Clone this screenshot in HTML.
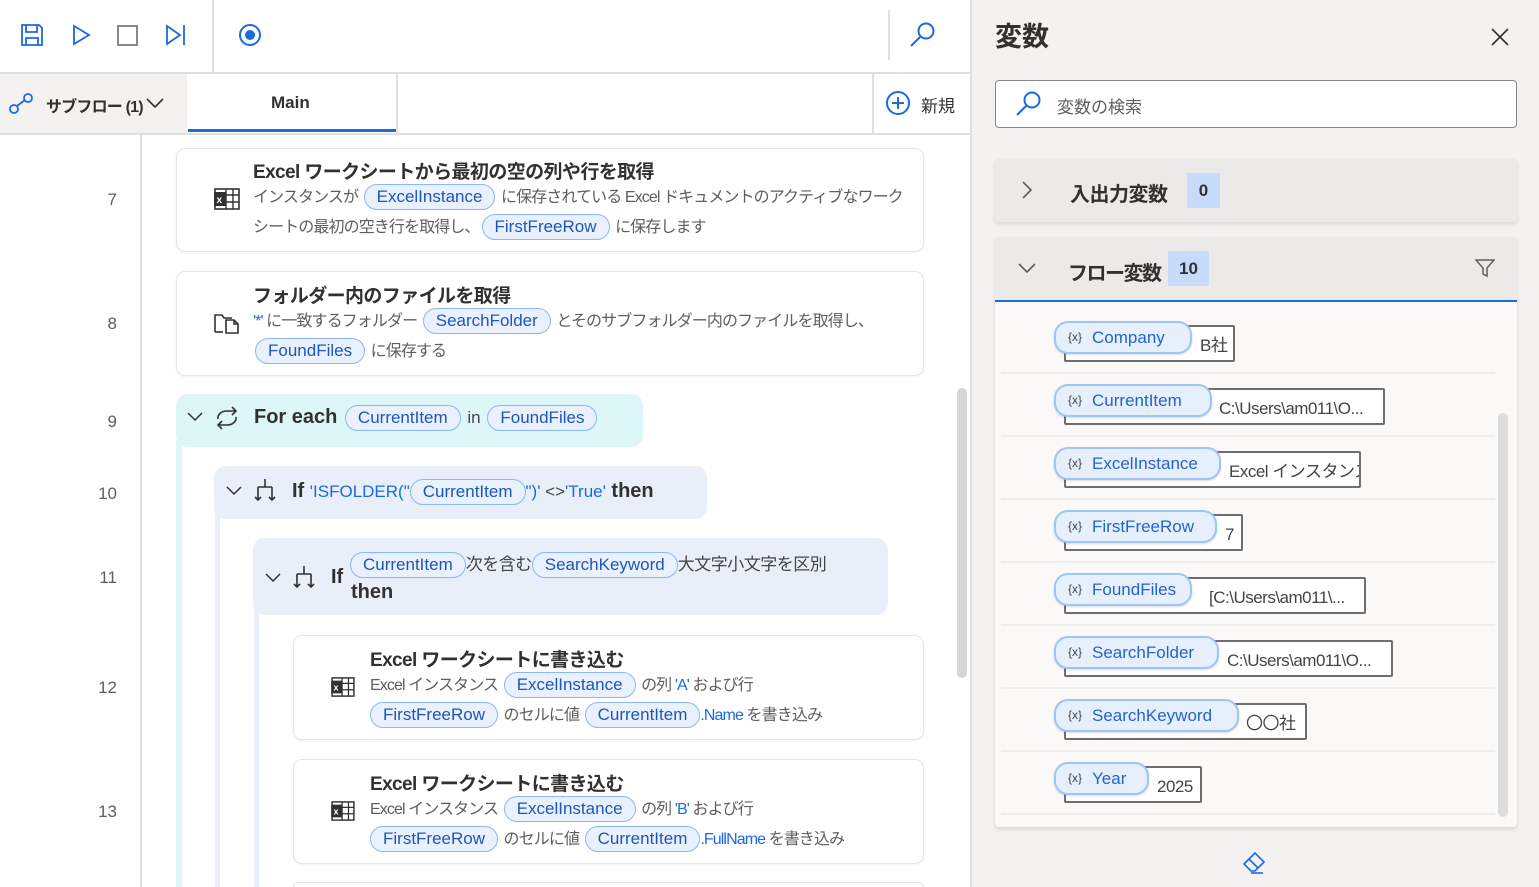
<!DOCTYPE html>
<html style="width:1539px;height:887px;overflow:hidden"><head><meta charset="utf-8">
<style>
*{box-sizing:border-box;margin:0;padding:0}
body{width:1539px;height:887px;overflow:hidden;position:relative;background:#fff;font-family:"Liberation Sans","Noto Sans CJK JP",sans-serif;color:#323130}
.a{position:absolute}
.card{position:absolute;background:#fff;border:1px solid #e6e6e6;border-radius:9px;box-shadow:0 1px 2px rgba(0,0,0,.06)}
.t{position:absolute;font-size:19px;color:#323130;white-space:nowrap;font-weight:bold;letter-spacing:-0.6px}
.l{position:absolute;font-size:16px;color:#605e5c;white-space:nowrap;line-height:26px;letter-spacing:-0.9px}
.p{display:inline-block;border:1px solid #8cb6f5;background:#e8f1fd;color:#1e56b8;border-radius:13px;padding:0 12px;line-height:24px;font-size:17px;margin:0 2px;letter-spacing:0}
.b{color:#1a6ae0}
.ln{position:absolute;right:1422px;font-size:17px;color:#605e5c}
.vp{position:absolute;height:33px;border:2px solid #9fc4f6;background:#e6f0fd;border-radius:14px;color:#2563c9;font-size:17px;line-height:29px;padding-left:12px;white-space:nowrap;box-shadow:0 1px 2px rgba(0,0,0,.15)}
.vp i{font-style:normal;font-size:12px;color:#444;margin-right:10px;vertical-align:2px}
.vb{position:absolute;height:37px;border:2px solid #6e6e6e;border-radius:2px;background:#fff;font-size:17px;color:#444;line-height:38px;white-space:nowrap;overflow:hidden;letter-spacing:-0.5px}
.sep{position:absolute;left:1001px;width:494px;height:2px;background:#efeeed}
</style></head><body>
<!-- toolbar -->
<div class="a" style="left:0;top:72px;width:970px;height:2px;background:#e1dfdd"></div>
<div class="a" style="left:212px;top:0;width:2px;height:72px;background:#e1dfdd"></div>
<div class="a" style="left:888px;top:10px;width:2px;height:50px;background:#e1dfdd"></div>
<svg class="a" style="left:20px;top:23px" width="24" height="24" viewBox="0 0 24 24" fill="none" stroke="#1a6ae0" stroke-width="1.8"><path d="M2 2h17l3 3v17H2z"/><path d="M6 2v7h11V2"/><path d="M6 22v-7h12v7"/></svg>
<svg class="a" style="left:72px;top:24px" width="20" height="22" viewBox="0 0 20 22" fill="none" stroke="#1a6ae0" stroke-width="1.8"><path d="M2 2l15 9-15 9z"/></svg>
<div class="a" style="left:117px;top:25px;width:21px;height:21px;border:2px solid #8a8886"></div>
<svg class="a" style="left:165px;top:24px" width="22" height="22" viewBox="0 0 22 22" fill="none" stroke="#1a6ae0" stroke-width="1.8"><path d="M2 2l13 9-13 9z"/><path d="M19 1v20"/></svg>
<svg class="a" style="left:238px;top:23px" width="24" height="24" viewBox="0 0 24 24"><circle cx="12" cy="12" r="10" fill="none" stroke="#1a6ae0" stroke-width="2"/><circle cx="12" cy="12" r="5" fill="#1a6ae0"/></svg>
<svg class="a" style="left:909px;top:21px" width="28" height="28" viewBox="0 0 28 28" fill="none" stroke="#1a6ae0" stroke-width="2"><circle cx="17" cy="10" r="7.5"/><path d="M11.5 15.5L2 25"/></svg>
<!-- tabs -->
<div class="a" style="left:0;top:74px;width:187px;height:59px;background:#f3f2f1"></div>
<svg class="a" style="left:8px;top:92px" width="26" height="24" viewBox="0 0 26 24" fill="none" stroke="#1a6ae0" stroke-width="1.8"><circle cx="6" cy="17" r="4"/><circle cx="20" cy="6" r="4"/><path d="M9 14l8-6"/></svg>
<div class="a" style="left:46px;top:93px;font-size:16px;font-weight:bold;color:#323130;letter-spacing:-0.8px;white-space:nowrap">サブフロー (1)</div>
<svg class="a" style="left:146px;top:97px" width="18" height="12" viewBox="0 0 18 12" fill="none" stroke="#323130" stroke-width="1.6"><path d="M1 2l8 8 8-8"/></svg>
<div class="a" style="left:271px;top:93px;font-size:17px;font-weight:bold">Main</div>
<div class="a" style="left:188px;top:129px;width:208px;height:3px;background:#1a6ae0"></div>
<div class="a" style="left:396px;top:74px;width:2px;height:59px;background:#e1dfdd"></div>
<div class="a" style="left:872px;top:74px;width:2px;height:59px;background:#e1dfdd"></div>
<svg class="a" style="left:885px;top:90px" width="26" height="26" viewBox="0 0 26 26" fill="none" stroke="#1a6ae0" stroke-width="2"><circle cx="13" cy="13" r="11"/><path d="M13 7v12M7 13h12"/></svg>
<div class="a" style="left:921px;top:92px;font-size:17px;color:#323130">新規</div>
<div class="a" style="left:0;top:133px;width:970px;height:2px;background:#e1dfdd"></div>
<!-- gutter -->
<div class="a" style="left:140px;top:135px;width:2px;height:752px;background:#e1dfdd"></div>
<div class="ln" style="top:190px">7</div><div class="ln" style="top:314px">8</div><div class="ln" style="top:412px">9</div><div class="ln" style="top:484px">10</div><div class="ln" style="top:568px">11</div><div class="ln" style="top:678px">12</div><div class="ln" style="top:802px">13</div>
<!-- vertical nest lines -->
<div class="a" style="left:176px;top:440px;width:6px;height:447px;background:#ddf6f8"></div>
<div class="a" style="left:215px;top:512px;width:5px;height:375px;background:#e8eff9"></div>
<div class="a" style="left:254px;top:608px;width:5px;height:279px;background:#e8eff9"></div>
<!-- card 7 -->
<div class="card" style="left:176px;top:148px;width:748px;height:104px"></div>
<svg class="a" style="left:214px;top:188px" width="26" height="22" viewBox="0 0 26 22"><rect x="1" y="1" width="24" height="20" fill="none" stroke="#323130" stroke-width="1.6"/><path d="M12 1v20M19 1v20M12 7h13M12 14h13" stroke="#323130" stroke-width="1.4"/><rect x="0" y="4" width="12" height="14" fill="#323130"/><text x="2.5" y="15" font-size="10" fill="#fff" font-family="Liberation Sans" font-weight="bold">x</text></svg>
<div class="t" style="left:253px;top:157px">Excel ワークシートから最初の空の列や行を取得</div>
<div class="l" style="left:253px;top:184px">インスタンスが <span class="p">ExcelInstance</span> に保存されている Excel ドキュメントのアクティブなワーク</div>
<div class="l" style="left:253px;top:214px">シートの最初の空き行を取得し、<span class="p">FirstFreeRow</span> に保存します</div>
<!-- card 8 -->
<div class="card" style="left:176px;top:271px;width:748px;height:105px"></div>
<svg class="a" style="left:214px;top:312px" width="26" height="22" viewBox="0 0 26 22" fill="none" stroke="#323130" stroke-width="1.6"><path d="M1 20V3h7l2 3h8"/><path d="M1 20h8"/><path d="M12 8h8l4 4v9H12z"/><path d="M20 8v4h4"/></svg>
<div class="t" style="left:253px;top:281px">フォルダー内のファイルを取得</div>
<div class="l" style="left:253px;top:308px"><span class="b">'*'</span> に一致するフォルダー <span class="p">SearchFolder</span> とそのサブフォルダー内のファイルを取得し、</div>
<div class="l" style="left:253px;top:338px"><span class="p">FoundFiles</span> に保存する</div>
<!-- for each -->
<div class="a" style="left:176px;top:394px;width:467px;height:53px;background:#ddf6f8;border-radius:12px"></div>
<svg class="a" style="left:186px;top:411px" width="18" height="12" viewBox="0 0 18 12" fill="none" stroke="#323130" stroke-width="1.5"><path d="M2 2l7 7 7-7"/></svg>
<svg class="a" style="left:213px;top:406px" width="28" height="24" viewBox="0 0 28 24" fill="none" stroke="#323130" stroke-width="1.6"><path d="M5 13a9 7 0 0 1 9-8h9"/><path d="M19 1l4 4-4 4"/><path d="M23 11a9 7 0 0 1-9 8H5"/><path d="M9 15l-4 4 4 4"/></svg>
<div class="a" style="left:254px;top:405px;font-size:20px;font-weight:bold;white-space:nowrap">For each <span class="p" style="font-weight:400">CurrentItem</span><span style="font-size:17px;color:#444;font-weight:400"> in </span><span class="p" style="font-weight:400">FoundFiles</span></div>
<!-- if 10 -->
<div class="a" style="left:214px;top:466px;width:493px;height:53px;background:#e8eff9;border-radius:12px"></div>
<svg class="a" style="left:225px;top:485px" width="18" height="12" viewBox="0 0 18 12" fill="none" stroke="#323130" stroke-width="1.5"><path d="M2 2l7 7 7-7"/></svg>
<svg class="a" style="left:254px;top:478px" width="22" height="24" viewBox="0 0 22 24" fill="none" stroke="#323130" stroke-width="1.6"><path d="M11 1v8M4 9h14M4 9v13M18 9v13M1 19l3 3 3-3M15 19l3 3 3-3"/></svg>
<div class="a" style="left:292px;top:479px;font-size:20px;font-weight:bold;white-space:nowrap">If <span class="b" style="font-size:17px;font-weight:400">'ISFOLDER("</span><span class="p" style="font-weight:400;margin:0">CurrentItem</span><span class="b" style="font-size:17px;font-weight:400">")' </span><span style="font-size:17px;font-weight:400;color:#444">&lt;&gt;</span><span class="b" style="font-size:17px;font-weight:400">'True'</span> then</div>
<!-- if 11 -->
<div class="a" style="left:253px;top:538px;width:635px;height:77px;background:#e8eff9;border-radius:12px"></div>
<svg class="a" style="left:264px;top:572px" width="18" height="12" viewBox="0 0 18 12" fill="none" stroke="#323130" stroke-width="1.5"><path d="M2 2l7 7 7-7"/></svg>
<svg class="a" style="left:293px;top:565px" width="22" height="24" viewBox="0 0 22 24" fill="none" stroke="#323130" stroke-width="1.6"><path d="M11 1v8M4 9h14M4 9v13M18 9v13M1 19l3 3 3-3M15 19l3 3 3-3"/></svg>
<div class="a" style="left:331px;top:566px;font-size:20px;font-weight:bold">If</div>
<div class="a" style="left:350px;top:550px;font-size:17px;color:#444;white-space:nowrap;letter-spacing:-0.5px"><span class="p" style="margin:0">CurrentItem</span>次を含む<span class="p" style="margin:0">SearchKeyword</span>大文字小文字を区別</div>
<div class="a" style="left:351px;top:581px;font-size:20px;font-weight:bold">then</div>
<!-- card 12 -->
<div class="card" style="left:293px;top:635px;width:631px;height:105px"></div>
<svg class="a" style="left:331px;top:677px" width="24" height="20" viewBox="0 0 26 22"><rect x="1" y="1" width="24" height="20" fill="none" stroke="#323130" stroke-width="1.6"/><path d="M12 1v20M19 1v20M12 7h13M12 14h13" stroke="#323130" stroke-width="1.4"/><rect x="0" y="4" width="12" height="14" fill="#323130"/><text x="2.5" y="15" font-size="10" fill="#fff" font-family="Liberation Sans" font-weight="bold">x</text></svg>
<div class="t" style="left:370px;top:645px">Excel ワークシートに書き込む</div>
<div class="l" style="left:370px;top:672px">Excel インスタンス <span class="p">ExcelInstance</span> の列 <span class="b">'A'</span> および行</div>
<div class="l" style="left:370px;top:702px"><span class="p" style="margin-left:0">FirstFreeRow</span> のセルに値 <span class="p" style="margin-right:0">CurrentItem</span><span class="b">.Name</span> を書き込み</div>
<!-- card 13 -->
<div class="card" style="left:293px;top:759px;width:631px;height:105px"></div>
<svg class="a" style="left:331px;top:801px" width="24" height="20" viewBox="0 0 26 22"><rect x="1" y="1" width="24" height="20" fill="none" stroke="#323130" stroke-width="1.6"/><path d="M12 1v20M19 1v20M12 7h13M12 14h13" stroke="#323130" stroke-width="1.4"/><rect x="0" y="4" width="12" height="14" fill="#323130"/><text x="2.5" y="15" font-size="10" fill="#fff" font-family="Liberation Sans" font-weight="bold">x</text></svg>
<div class="t" style="left:370px;top:769px">Excel ワークシートに書き込む</div>
<div class="l" style="left:370px;top:796px">Excel インスタンス <span class="p">ExcelInstance</span> の列 <span class="b">'B'</span> および行</div>
<div class="l" style="left:370px;top:826px"><span class="p" style="margin-left:0">FirstFreeRow</span> のセルに値 <span class="p" style="margin-right:0">CurrentItem</span><span class="b">.FullName</span> を書き込み</div>
<div class="card" style="left:293px;top:882px;width:631px;height:5px;border-bottom:none;border-radius:9px 9px 0 0"></div>
<!-- scrollbar -->
<div class="a" style="left:957px;top:388px;width:10px;height:290px;background:#d6d6d6;border-radius:5px"></div>

<!-- right panel -->
<div class="a" style="left:970px;top:0;width:569px;height:887px;background:#f3f2f1;border-left:2px solid #e1dfdd"></div>
<div class="a" style="left:995px;top:15px;font-size:27px;font-weight:700;color:#323130">変数</div>
<svg class="a" style="left:1491px;top:28px" width="18" height="18" viewBox="0 0 18 18" stroke="#323130" stroke-width="1.6"><path d="M1 1l16 16M17 1L1 17"/></svg>
<div class="a" style="left:995px;top:80px;width:522px;height:48px;background:#fff;border:1px solid #8a8886;border-radius:4px"></div>
<svg class="a" style="left:1015px;top:90px" width="28" height="28" viewBox="0 0 28 28" fill="none" stroke="#1a6ae0" stroke-width="2"><circle cx="17" cy="10" r="7.5"/><path d="M11.5 15.5L2 25"/></svg>
<div class="a" style="left:1057px;top:93px;font-size:17px;color:#605e5c">変数の検索</div>
<div class="a" style="left:995px;top:159px;width:522px;height:63px;background:#ebeae9;border-radius:4px;box-shadow:0 2px 4px rgba(0,0,0,.12)"></div>
<svg class="a" style="left:1021px;top:180px" width="12" height="20" viewBox="0 0 12 20" fill="none" stroke="#605e5c" stroke-width="1.6"><path d="M2 2l8 8-8 8"/></svg>
<div class="a" style="left:1070px;top:178px;font-size:20px;font-weight:700;color:#323130;letter-spacing:-0.5px">入出力変数</div>
<div class="a" style="left:1187px;top:173px;width:33px;height:35px;background:#c7dcfb;font-size:17px;font-weight:700;text-align:center;line-height:35px">0</div>
<div class="a" style="left:995px;top:237px;width:522px;height:590px;background:#faf9f8;border-radius:4px;box-shadow:0 2px 4px rgba(0,0,0,.12)"></div>
<div class="a" style="left:995px;top:237px;width:522px;height:64px;background:#ebeae9;border-radius:4px 4px 0 0"></div>
<div class="a" style="left:995px;top:300px;width:522px;height:2px;background:#1a6ae0"></div>
<svg class="a" style="left:1017px;top:262px" width="20" height="12" viewBox="0 0 20 12" fill="none" stroke="#605e5c" stroke-width="1.6"><path d="M2 2l8 8 8-8"/></svg>
<div class="a" style="left:1068px;top:257px;font-size:20px;font-weight:700;color:#323130;letter-spacing:-1.5px">フロー変数</div>
<div class="a" style="left:1168px;top:251px;width:41px;height:35px;background:#c7dcfb;font-size:17px;font-weight:700;text-align:center;line-height:35px">10</div>
<svg class="a" style="left:1475px;top:259px" width="20" height="18" viewBox="0 0 20 18" fill="none" stroke="#605e5c" stroke-width="1.5"><path d="M1 1h18l-7 8v8l-4-2V9z"/></svg>
<div class="a" style="left:1498px;top:413px;width:10px;height:404px;background:#dcdcdc;border-radius:5px"></div>

<div class="sep" style="top:372px"></div><div class="sep" style="top:435px"></div><div class="sep" style="top:498px"></div><div class="sep" style="top:561px"></div><div class="sep" style="top:624px"></div><div class="sep" style="top:687px"></div><div class="sep" style="top:750px"></div><div class="sep" style="top:813px"></div>

<div class="vb" style="left:1064px;top:325px;width:171px;padding-left:134px">B社</div>
<div class="vp" style="left:1054px;top:321px;width:138px"><i>{x}</i>Company</div>
<div class="vb" style="left:1064px;top:388px;width:321px;padding-left:153px">C:\Users\am011\O...</div>
<div class="vp" style="left:1054px;top:384px;width:158px"><i>{x}</i>CurrentItem</div>
<div class="vb" style="left:1064px;top:451px;width:297px;padding-left:163px">Excel インスタンス</div>
<div class="vp" style="left:1054px;top:447px;width:167px"><i>{x}</i>ExcelInstance</div>
<div class="vb" style="left:1064px;top:514px;width:179px;padding-left:159px">7</div>
<div class="vp" style="left:1054px;top:510px;width:163px"><i>{x}</i>FirstFreeRow</div>
<div class="vb" style="left:1064px;top:577px;width:302px;padding-left:143px">[C:\Users\am011\...</div>
<div class="vp" style="left:1054px;top:573px;width:138px"><i>{x}</i>FoundFiles</div>
<div class="vb" style="left:1064px;top:640px;width:329px;padding-left:161px">C:\Users\am011\O...</div>
<div class="vp" style="left:1054px;top:636px;width:165px"><i>{x}</i>SearchFolder</div>
<div class="vb" style="left:1064px;top:703px;width:243px;padding-left:180px">〇〇社</div>
<div class="vp" style="left:1054px;top:699px;width:185px"><i>{x}</i>SearchKeyword</div>
<div class="vb" style="left:1064px;top:766px;width:138px;padding-left:91px">2025</div>
<div class="vp" style="left:1054px;top:762px;width:95px"><i>{x}</i>Year</div>

<svg class="a" style="left:1242px;top:850px" width="26" height="24" viewBox="0 0 26 24" fill="none" stroke="#1a6ae0" stroke-width="1.6"><path d="M2 14L13 3l9 9-9 9H9z"/><path d="M7 9l9 9"/><path d="M9 23h12"/></svg>
</body></html>
